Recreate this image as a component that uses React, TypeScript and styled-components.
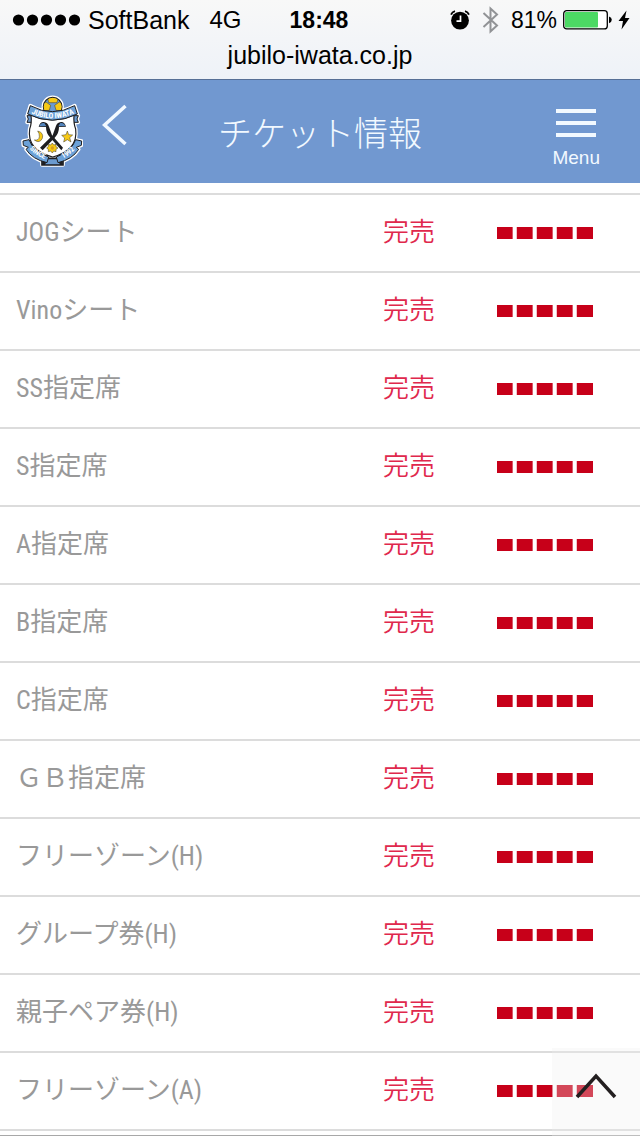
import React from "react";
import styled, { createGlobalStyle } from "styled-components";

const GlobalStyle = createGlobalStyle`
  *, *::before, *::after { box-sizing: border-box; }
  body { margin: 0; background: #fff; }
`;

const uiFont = `"Liberation Sans", Arial, sans-serif`;
const siteFont = `"Roboto Condensed", "Liberation Sans Narrow", "Noto Sans CJK JP", sans-serif`;

const Page = styled.div`
  display: flex;
  flex-direction: column;
  min-height: 100vh;
  padding-bottom: 4px;
  border-bottom: 1px solid #a8a8a8;
  font-family: ${siteFont};
`;

const BrowserBar = styled.div`
  height: 80px;
  border-bottom: 1px solid #566f96;
  background: linear-gradient(#f8f8f8, #eef2f8);
  color: #000;
  font-family: ${uiFont};
`;

const StatusRow = styled.div`
  display: grid;
  grid-template-columns: 1fr auto 1fr;
  align-items: center;
  height: 40px;
  padding: 0 10px 0 8px;
  font-size: 23px;
  line-height: 40px;
`;

const StatusGroup = styled.div<{ $end?: boolean }>`
  display: flex;
  align-items: center;
  justify-content: ${(p) => (p.$end ? "flex-end" : "flex-start")};
  gap: ${(p) => (p.$end ? 12 : 8)}px;
  padding-left: 4px;
`;

const PowerGroup = styled.div`
  display: flex;
  align-items: center;
  gap: 6px;
`;

const Carrier = styled.span`
  margin-right: 12px;
  font-size: 25px;
`;

const Network = styled.span`
  font-size: 24px;
`;

const Clock = styled.time`
  font-weight: 700;
`;

const Address = styled.div`
  font-size: 25px;
  line-height: 30px;
  text-align: center;
`;

const Header = styled.header`
  display: grid;
  grid-template-columns: 1fr auto 1fr;
  align-items: center;
  height: 103px;
  padding: 0 40px 0 21px;
  background: #7198d0;
  color: #f2f9ff;
`;

const HeaderLinks = styled.nav`
  display: flex;
  align-items: center;
  gap: 19px;
`;

const IconLink = styled.a`
  display: block;
  color: inherit;
  svg { display: block; }
`;

const BackLink = styled(IconLink)`
  margin-bottom: 14px;
`;

const Title = styled.h1`
  margin: 0;
  padding-left: 19px;
  font-family: "Noto Sans CJK JP", sans-serif;
  font-size: 34px;
  font-weight: 300;
  line-height: 48px;
`;

const MenuButton = styled.button`
  display: flex;
  flex-direction: column;
  align-items: center;
  justify-self: end;
  gap: 11px;
  margin-top: 14px;
  padding: 0;
  border: 0;
  background: none;
  color: inherit;
  font-family: ${uiFont};
  font-size: 19px;
  line-height: 20px;
`;

const MenuBars = styled.span`
  width: 40px;
  height: 28px;
  border: solid currentColor;
  border-width: 4px 0;
  padding: 8px 0;
  &::before {
    content: "";
    display: block;
    height: 4px;
    background: currentColor;
  }
`;

const SeatTable = styled.table`
  width: 100%;
  margin-top: 10px;
  border-top: 2px solid #dcdcdc;
  border-spacing: 0;
  table-layout: fixed;
  font-size: 26px;
  font-weight: 400;
  line-height: 38px;
`;

const NameCol = styled.col``;
const StatusCol = styled.col`
  width: 114px;
`;
const MeterCol = styled.col`
  width: 159px;
`;

const SeatRow = styled.tr`
  height: 78px;
`;

const NameCell = styled.th`
  padding: 0 0 2px 16px;
  border-bottom: 2px solid #dcdcdc;
  color: #999;
  font-weight: inherit;
  text-align: left;
`;

const StatusCell = styled.td`
  padding: 0 0 2px 16px;
  border-bottom: 2px solid #dcdcdc;
  color: #e0284c;
  font-weight: 350;
`;

const MeterCell = styled.td`
  padding: 0 0 0 16px;
  border-bottom: 2px solid #dcdcdc;
`;

const Meter = styled.div`
  display: flex;
  gap: 4px;
`;

const Block = styled.span`
  width: 16px;
  height: 12px;
  background: #c70019;
  & + & { box-shadow: -1px 0 #f3c3ca; }
  &:not(:last-child) { border-right: 1px solid #da5a6b; }
`;

const TopButton = styled.button`
  position: fixed;
  right: 0;
  bottom: 0;
  width: 88px;
  height: 88px;
  padding: 0 0 12px;
  border: 0;
  background: rgba(240, 240, 240, 0.3);
  svg { display: block; margin: 0 auto; }
`;

const seats = [
  "JOGシート",
  "Vinoシート",
  "SS指定席",
  "S指定席",
  "A指定席",
  "B指定席",
  "C指定席",
  "ＧＢ指定席",
  "フリーゾーン(H)",
  "グループ券(H)",
  "親子ペア券(H)",
  "フリーゾーン(A)",
];

const SignalDots = () => (
  <svg width="68" height="12" viewBox="0 0 68 12" aria-hidden="true">
    {[6, 20, 34, 48, 62].map((x) => (
      <circle key={x} cx={x + 0.5} cy="6" r="5.6" />
    ))}
  </svg>
);

const AlarmIcon = () => (
  <svg width="20" height="20" viewBox="0 0 20 20" aria-hidden="true">
    <circle cx="10" cy="10.6" r="8.9" />
    <path d="M1 4.600Q2.200 2 5 1.200M19 4.600Q17.800 2 15 1.200" fill="none" stroke="#000" strokeWidth="1.8" />
    <path d="M10.500 5.500V11.200H6.500" fill="none" stroke="#fff" strokeWidth="1.700" />
  </svg>
);

const BluetoothIcon = () => (
  <svg width="17" height="28" viewBox="0 0 17 28" aria-hidden="true">
    <path d="M1.500 7L15 19.500L8.500 25.500V2.500L15 8.500L1.500 21" fill="none" stroke="#919396" strokeWidth="2" />
  </svg>
);

const BatteryIcon = () => (
  <svg width="49" height="20" viewBox="0 0 49 20" aria-hidden="true">
    <rect x="0.700" y="0.700" width="43.600" height="18.200" rx="3" fill="#fff" stroke="#000" strokeWidth="1.300" />
    <rect x="2" y="2" width="33" height="15.600" rx="1" fill="#4cd964" />
    <path d="M46 6.500Q48.800 7.500 48.800 9.800T46 13.200Z" />
  </svg>
);

const BoltIcon = () => (
  <svg width="12" height="20" viewBox="0 0 12 20" aria-hidden="true">
    <path d="M8.500 0.500L0.500 11H5L3.500 19.500L11.500 8H7Z" />
  </svg>
);

const bottomLeft = "M68 194L86 190Q98 224 145 242L140 259Q96 249 77 219L84 213L69 207Z";
const bottomRight = "M244 194L226 190Q214 224 168 242L173 259Q216 249 235 219L228 213L243 207Z";
const topBanner = "M90 88Q156 124 223 88L231 113Q156 150 82 113Z";
const shield = "M92 116Q156 145 221 116Q219 140 226 158Q234 222 157 242Q79 222 88 158Q95 140 92 116Z";
const tails = "M80 118H98V138H80L84 128ZM234 118H216V138H234L230 128Z";

const Emblem = () => (
  <svg width="62" height="73" viewBox="62 56 186 219" role="img" aria-label="JUBILO IWATA">
    <defs>
      <path id="topArc" d="M88 109Q156 143 226 109" />
      <path id="leftArc" d="M82 209Q98 236 142 252" />
      <path id="rightArc" d="M172 253Q214 238 233 206" />
      <clipPath id="ballClip"><circle cx="157" cy="91" r="27" /></clipPath>
    </defs>
    <g fill="#fff" stroke="#fff" strokeWidth="11" strokeLinejoin="round">
      <circle cx="157" cy="91" r="28" />
      <path d={topBanner} />
      <path d={tails} />
      <path d={shield} />
      <path d={bottomLeft} />
      <path d={bottomRight} />
      <path d="M125 244H188V266H125Z" />
    </g>
    <circle cx="157" cy="91" r="28" fill="#6b9bd1" stroke="#1d1d20" strokeWidth="3.5" />
    <g clipPath="url(#ballClip)" fill="#f7c916" stroke="#38352b" strokeWidth="1.5">
      <path d="M142 66L157 60L173 66L170 79H145Z" />
      <path d="M126 84L137 77L151 87L147 102L130 103Z" />
      <path d="M188 84L177 77L163 87L167 102L184 103Z" />
    </g>
    <path d="M125 246H188V266H125Z" fill="#6b9bd1" stroke="#1d1d20" strokeWidth="5" />
    <path d="M126 246L144 244L134 266H126ZM187 246L170 244L179 266H187Z" fill="#1d1d20" />
    <path d={tails} fill="#6b9bd1" stroke="#1d1d20" strokeWidth="3" />
    <path d={shield} fill="#fff" stroke="#1d1d20" strokeWidth="3.5" />
    <path d={topBanner} fill="#6ba1d8" stroke="#1d1d20" strokeWidth="3" />
    <g fill="#1d1d20">
      <path d="M115 151Q119 136 130 137Q142 138 146 151L155 177L188 214L183 222L150 184Q137 172 137 152Z" />
      <path d="M197 151Q193 136 182 137Q170 138 166 151L157 177L119 214L127 222L163 184Q176 172 176 152Z" />
    </g>
    <path d="M117 149Q121 138 132 140L138 150ZM195 149Q191 138 180 140L174 150Z" fill="#5284bd" />
    <path d="M112 164Q131 169 126 186Q118 203 102 191Q116 193 117 181Q118 172 112 164Z" fill="#f7c916" stroke="#38352b" strokeWidth="1.5" />
    <path d="M201 164L205 175L217 176L208 184L212 197L201 190L190 197L193 185L184 177L197 175Z" fill="#f7c916" stroke="#38352b" strokeWidth="1.5" />
    <path d="M156 200L160 206L167 204L167 211L173 215L167 219L167 226L160 224L156 230L151 224L144 226L144 219L139 215L144 211L144 204L151 206Z" fill="#f7c916" stroke="#38352b" strokeWidth="1.5" />
    <circle cx="156" cy="215" r="5" fill="#d99d1a" />
    <path d={bottomLeft} fill="#6ba1d8" stroke="#1d1d20" strokeWidth="3" />
    <path d={bottomRight} fill="#6ba1d8" stroke="#1d1d20" strokeWidth="3" />
    <g fill="#fff" fontFamily="Roboto Condensed, Liberation Sans Narrow, sans-serif" fontWeight="700" textAnchor="middle">
      <text fontSize="23"><textPath href="#topArc" startOffset="50%">JUBILO IWATA</textPath></text>
      <text fontSize="22"><textPath href="#leftArc" startOffset="50%">SINCE</textPath></text>
      <text fontSize="22"><textPath href="#rightArc" startOffset="50%">1992</textPath></text>
    </g>
  </svg>
);

export default function App() {
  return (
    <Page>
      <GlobalStyle />
      <BrowserBar>
        <StatusRow>
          <StatusGroup>
            <SignalDots />
            <Carrier>SoftBank</Carrier>
            <Network>4G</Network>
          </StatusGroup>
          <Clock>18:48</Clock>
          <StatusGroup $end>
            <AlarmIcon />
            <BluetoothIcon />
            <PowerGroup>
              <span>81%</span>
              <BatteryIcon />
              <BoltIcon />
            </PowerGroup>
          </StatusGroup>
        </StatusRow>
        <Address>jubilo-iwata.co.jp</Address>
      </BrowserBar>
      <Header>
        <HeaderLinks>
          <IconLink href="#home"><Emblem /></IconLink>
          <BackLink href="#back" aria-label="Back">
            <svg width="26" height="42" viewBox="0 0 26 42" fill="none" stroke="currentColor" strokeWidth="3.500">
              <path d="M23.500 2L2.500 21L23.500 40" />
            </svg>
          </BackLink>
        </HeaderLinks>
        <Title>チケット情報</Title>
        <MenuButton type="button">
          <MenuBars />
          Menu
        </MenuButton>
      </Header>
      <SeatTable>
        <colgroup>
          <NameCol />
          <StatusCol />
          <MeterCol />
        </colgroup>
        <tbody>
          {seats.map((name) => (
            <SeatRow key={name}>
              <NameCell scope="row">{name}</NameCell>
              <StatusCell>完売</StatusCell>
              <MeterCell>
                <Meter>
                  {[1, 2, 3, 4, 5].map((n) => (
                    <Block key={n} />
                  ))}
                </Meter>
              </MeterCell>
            </SeatRow>
          ))}
        </tbody>
      </SeatTable>
      <TopButton type="button" aria-label="Top">
        <svg width="42" height="26" viewBox="0 0 42 26" fill="none" stroke="#231f20" strokeWidth="3.500">
          <path d="M2 24L21 3L40 24" />
        </svg>
      </TopButton>
    </Page>
  );
}
